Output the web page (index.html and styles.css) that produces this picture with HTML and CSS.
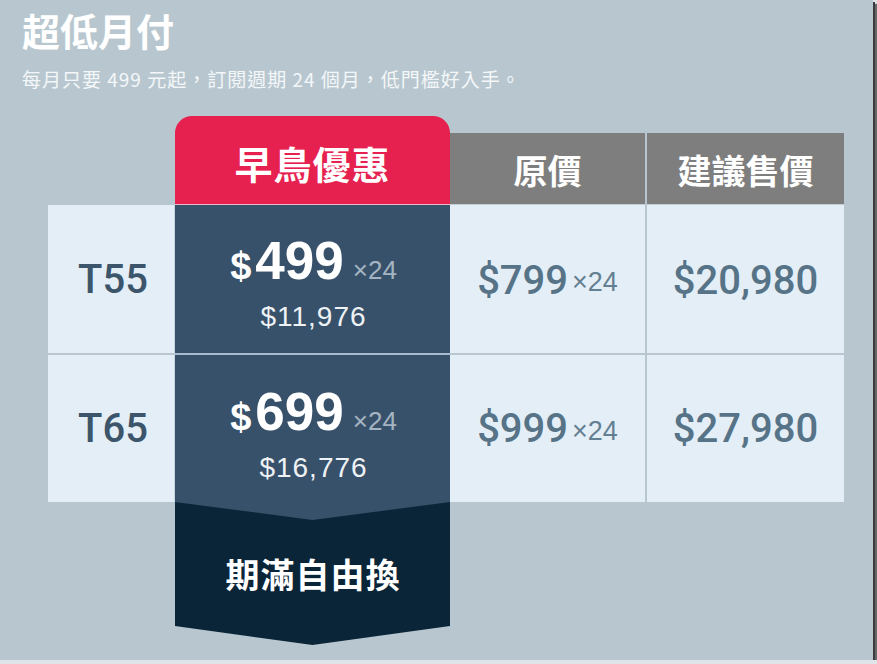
FILE: index.html
```html
<!DOCTYPE html>
<html lang="zh-Hant">
<head>
<meta charset="utf-8">
<title>超低月付</title>
<link rel="stylesheet" href="styles.css">
</head>
<body>
<div class="page">
  <h1 class="title">超低月付</h1>
  <p class="sub">每月只要 499 元起，訂閱週期 24 個月，低門檻好入手。</p>

  <div class="plan">
    <div class="corner"></div>
    <div class="tab">早鳥優惠</div>
    <div class="head">原價</div>
    <div class="head head-last">建議售價</div>

    <div class="model">T55</div>
    <div class="promo">
      <div class="promo-main"><span class="cur">$</span><span class="big">499</span><span class="times">×24</span></div>
      <div class="promo-total">$11,976</div>
    </div>
    <div class="price">$799<span class="times-l">×24</span></div>
    <div class="price price-last">$20,980</div>

    <div class="model row2">T65</div>
    <div class="promo row2">
      <div class="promo-main"><span class="cur">$</span><span class="big">699</span><span class="times">×24</span></div>
      <div class="promo-total">$16,776</div>
    </div>
    <div class="price row2">$999<span class="times-l">×24</span></div>
    <div class="price price-last row2">$27,980</div>

    <div class="chevron"><span class="chevron-text">期滿自由換</span></div>
  </div>
</div>
</body>
</html>
```

FILE: styles.css
```css
* { box-sizing: border-box; }

html, body {
  margin: 0;
  padding: 0;
  background: #dfe4e8;
}

.page {
  width: 873px;
  height: 660px;
  background: #b8c7cf;
  box-shadow: 2px 2px 0 #3b3b3b, 4px 4px 1px rgba(0, 0, 0, 0.55);
  padding: 6px 0 0 22px;
  font-family: "Liberation Sans", Arial, sans-serif;
  overflow: hidden;
}

.title {
  margin: 0;
  font-family: "Noto Sans CJK TC", "Noto Sans", sans-serif;
  font-weight: 700;
  font-size: 38px;
  line-height: 48px;
  color: #ffffff;
}

.sub {
  margin: 12px 0 0 0;
  font-family: "Noto Sans CJK TC", "Noto Sans", sans-serif;
  font-size: 19px;
  line-height: 26px;
  letter-spacing: 1px;
  color: #f4f7f9;
}

.plan {
  margin: 24px 0 0 26px;
  display: grid;
  grid-template-columns: 127px 275px 197px 197px;
  grid-template-rows: 89px 150px 147px 143px;
}

.tab {
  background: #e6214f;
  border-radius: 17px 17px 0 0;
  border-bottom: 1px solid #ecb9c6;
  color: #ffffff;
  font-family: "Noto Sans CJK TC", sans-serif;
  font-weight: 700;
  font-size: 38px;
  letter-spacing: 1px;
  display: flex;
  align-items: center;
  justify-content: center;
  padding-top: 4px;
}

.head {
  align-self: end;
  height: 72px;
  background: #7e7e7e;
  border-bottom: 1px solid #c2ced6;
  border-right: 2px solid #b8c7cf;
  color: #ffffff;
  font-family: "Noto Sans CJK TC", sans-serif;
  font-weight: 700;
  font-size: 34px;
  display: flex;
  align-items: center;
  justify-content: center;
  padding-top: 2px;
}

.head-last { border-right: none; }

.model {
  background: #e4eef6;
  border-bottom: 2px solid #b8c7cf;
  border-right: 1px solid #c9d5de;
  color: #3c556b;
  font-family: Roboto, "Liberation Sans", sans-serif;
  font-weight: 500;
  font-size: 40px;
  display: flex;
  align-items: center;
  justify-content: center;
  padding-left: 4px;
}

.promo {
  background: #38516a;
  border-bottom: 2px solid #a9bccb;
  display: flex;
  flex-direction: column;
  align-items: center;
  padding-top: 30px;
  padding-left: 2px;
}

.promo.row2 {
  border-bottom: none;
  padding-top: 31px;
}

.promo-main {
  color: #ffffff;
  font-weight: 700;
  line-height: 52px;
  height: 52px;
  white-space: nowrap;
}

.cur {
  font-size: 38px;
  margin-right: 4px;
}

.big {
  font-size: 53px;
}

.times {
  font-weight: 400;
  font-size: 26px;
  color: #a5b4c2;
  margin-left: 9px;
}

.promo-total {
  margin-top: 16px;
  color: #eef2f5;
  font-size: 28px;
  line-height: 28px;
  letter-spacing: 1px;
}

.price {
  background: #e4eef6;
  border-bottom: 2px solid #b8c7cf;
  border-right: 2px solid #b8c7cf;
  color: #567387;
  font-family: Roboto, "Liberation Sans", sans-serif;
  font-weight: 500;
  font-size: 40px;
  display: flex;
  align-items: center;
  justify-content: center;
  white-space: nowrap;
  padding-top: 2px;
}

.price-last { border-right: none; }

.row2 { border-bottom: none; }
.model.row2, .price.row2 { padding-top: 0; }

.times-l {
  font-family: "Liberation Sans", sans-serif;
  font-weight: 400;
  font-size: 27px;
  color: #647f92;
  margin-left: 4px;
  padding-top: 5px;
}

.chevron {
  grid-column: 2;
  grid-row: 4;
  background: #0b2538;
  clip-path: polygon(0 0, 100% 0, 100% 124px, 50% 100%, 0 124px);
  display: flex;
  flex-direction: column;
  align-items: center;
}

.chevron::before {
  content: "";
  display: block;
  align-self: stretch;
  height: 18px;
  background: #38516a;
  clip-path: polygon(0 0, 100% 0, 50% 100%);
}

.chevron-text {
  margin-top: 34px;
  color: #ffffff;
  font-family: "Noto Sans CJK TC", sans-serif;
  font-weight: 700;
  font-size: 34px;
  line-height: 40px;
  letter-spacing: 1px;
  padding-left: 1px;
}
```
